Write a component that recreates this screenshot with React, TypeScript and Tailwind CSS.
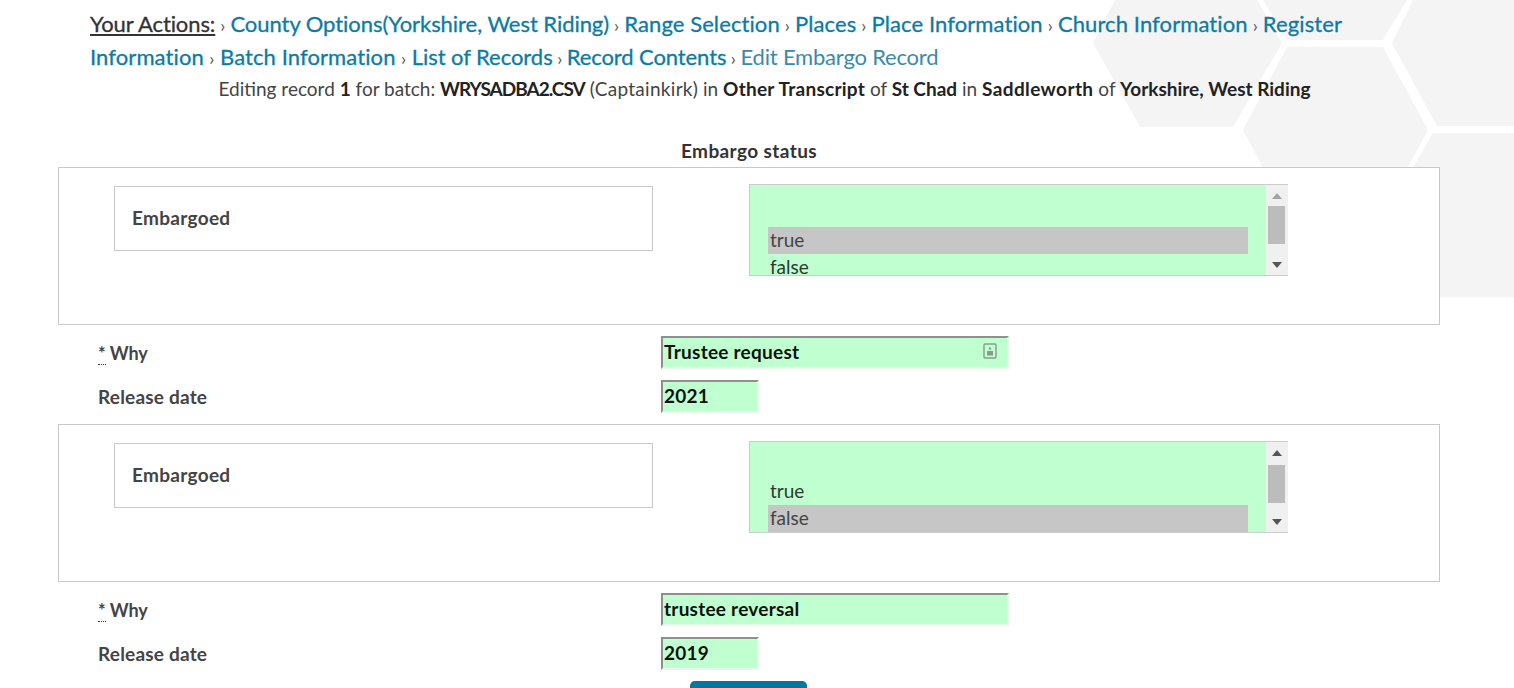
const font = "font-['Lato','Liberation_Sans',sans-serif]";

function Sep({ className = "mx-[5px]" }: { className?: string }) {
  return <span className={`${className} text-[18px] leading-none text-[#555]`}>›</span>;
}

function Crumb({ children, className = "" }: { children: React.ReactNode; className?: string }) {
  return <a className={`text-[#0b7ca3] [-webkit-text-stroke:0.3px_#0b7ca3] ${className}`}>{children}</a>;
}

function ListBox({ selected }: { selected: "true" | "false" }) {
  const scrolled = selected === "false";
  const opts = ["true", "false"];
  return (
    <div className="relative flex h-[92px] w-[539px] overflow-hidden border border-r-0 border-[#cccccc] bg-[#c0ffd0]">
      <div className={`flex-1 pl-[18px] ${scrolled ? "pt-[36px]" : "pt-[42px]"}`}>
        {opts.map((o) => (
          <div
            key={o}
            className={`h-[27px] w-[480px] pl-[2px] text-[19px] leading-[26px] ${
              o === selected ? "bg-[#c6c6c6] text-[#444]" : "text-[#2b3a2f]"
            }`}
          >
            {o}
          </div>
        ))}
      </div>
      <div className="flex w-[22px] flex-col items-center justify-between bg-[#f0f0f0] py-[6px]">
        <svg width="10" height="6" viewBox="0 0 10 6" className="mt-[2px]">
          <path d="M5 0 L10 6 L0 6 Z" fill={scrolled ? "#555" : "#a3a3a3"} />
        </svg>
        <div className={`absolute right-[3px] h-[38px] w-[17px] bg-[#bcbcbc] ${scrolled ? "top-[23px]" : "top-[21px]"}`} />
        <svg width="10" height="6" viewBox="0 0 10 6" className="mb-[1px]">
          <path d="M0 0 L10 0 L5 6 Z" fill="#555" />
        </svg>
      </div>
    </div>
  );
}

function Field({ value, w, icon }: { value: string; w: string; icon?: boolean }) {
  return (
    <div
      className={`relative h-[33px] ${w} border-2 border-t-[#8f8f8f] border-l-[#8f8f8f] border-r-[#e8f8ec] border-b-[#e8f8ec] bg-[#c0ffd0] pl-[1px] text-[19px] font-bold leading-[27px] tracking-[0.25px] text-[#111]`}
    >
      {value}
      {icon && (
        <svg width="14" height="16" viewBox="0 0 14 16" className="absolute right-[10px] top-[5px]">
          <rect x="1" y="1" width="12" height="14" rx="1" fill="none" stroke="#8a9a8e" strokeWidth="1.4" />
          <path d="M7 3.5 L8.6 6.5 L5.4 6.5 Z" fill="#8a9a8e" />
          <rect x="4" y="8" width="6" height="4.5" fill="#8a9a8e" />
        </svg>
      )}
    </div>
  );
}

function Row({ label, why, children, mt }: { label: string; why?: boolean; children: React.ReactNode; mt: string }) {
  return (
    <div className={`flex items-center ${mt}`}>
      <div className={`w-[603px] pl-[40px] font-bold leading-[27px] text-[#444] ${why ? "pt-[2px] text-[18px]" : "text-[19px] tracking-[0.2px]"}`}>
        {why && <span className="mr-[4px] border-b border-dotted border-[#333] leading-[14px]">*</span>}
        {label}
      </div>
      {children}
    </div>
  );
}

function Box({ selected }: { selected: "true" | "false" }) {
  return (
    <div className="relative h-[158px] w-[1382px] border border-[#c8c8c8] bg-white pl-[55px] pt-[16px]">
      <div className="flex items-start">
        <div className="mt-[2px] flex h-[65px] w-[539px] items-center border border-[#c8c8c8] bg-white pl-[17px] text-[19px] font-bold tracking-[0.3px] text-[#444]">
          Embargoed
        </div>
        <div className="ml-[96px]">
          <ListBox selected={selected} />
        </div>
      </div>
    </div>
  );
}

const B = ({ children, className = "" }: { children: React.ReactNode; className?: string }) => (
  <b className={`text-[#222] ${className}`}>{children}</b>
);

export default function App() {
  return (
    <div className={`relative h-[688px] w-[1514px] overflow-hidden bg-white ${font}`}>
      <svg className="absolute left-0 top-0" width="1514" height="688" viewBox="0 0 1514 688">
        <g fill="#f4f4f5">
          <polygon points="1115,0 1257,0 1282,43 1233,127 1140,127 1093,43" />
          <polygon points="1263,0 1407,0 1383,40 1287,40" />
          <polygon points="1413,0 1514,0 1514,126 1437,126 1392,43" />
          <polygon points="1287,47 1383,47 1428,130 1383,213 1287,213 1243,130" />
          <polygon points="1433,133 1514,133 1514,297 1400,297 1400,190" />
        </g>
      </svg>
      <div className="relative pl-[58px]">
        <div className="ml-[32px] w-[1270px] pt-[7px] text-[22px] leading-[33px] tracking-[0.1px]">
          <span className="text-[#333] underline [-webkit-text-stroke:0.3px_#333] tracking-[-0.1px]">Your Actions:</span>
          <Sep /><Crumb className="tracking-[-0.05px]">County Options(Yorkshire, West Riding)</Crumb>
          <Sep /><Crumb>Range Selection</Crumb>
          <Sep /><Crumb>Places</Crumb>
          <Sep /><Crumb>Place Information</Crumb>
          <Sep /><Crumb>Church Information</Crumb>
          <Sep /><Crumb>Register Information</Crumb>
          <Sep className="mx-[5.5px]" /><Crumb>Batch Information</Crumb>
          <Sep className="mx-[5.5px]" /><Crumb className="tracking-[-0.05px]">List of Records</Crumb>
          <Sep className="mx-[4.5px]" /><Crumb className="tracking-[-0.1px]">Record Contents</Crumb>
          <Sep className="mx-[4.5px]" /><span className="tracking-[-0.2px] text-[#3a8aa8]">Edit Embargo Record</span>
        </div>
        <div className="mt-[1px] w-[1413px] text-center text-[19px] leading-[30px] text-[#444]">
          Editing record <B>1</B> for batch: <B className="tracking-[-1px]">WRYSADBA2.CSV</B>{" "}
          <span className="tracking-[0.3px]">(Captainkirk)</span> in{" "}
          <B className="tracking-[0.25px]">Other Transcript</B> of <B>St Chad</B> in{" "}
          <B className="tracking-[0.4px]">Saddleworth</B> of <B>Yorkshire, West Riding</B>
        </div>
        <div className="mt-[33px] w-[1382px] text-center text-[19px] font-bold leading-[27px] tracking-[0.4px] text-[#333]">
          Embargo status
        </div>
        <div className="mt-[3px]">
          <Box selected="true" />
        </div>
        <Row label="Why" why mt="mt-[11px]">
          <Field value="Trustee request" w="w-[348px]" icon />
        </Row>
        <Row label="Release date" mt="mt-[11px]">
          <Field value="2021" w="w-[98px]" />
        </Row>
        <div className="mt-[11px]">
          <Box selected="false" />
        </div>
        <Row label="Why" why mt="mt-[11px]">
          <Field value="trustee reversal" w="w-[348px]" />
        </Row>
        <Row label="Release date" mt="mt-[11px]">
          <Field value="2019" w="w-[98px]" />
        </Row>
        <div className="ml-[632px] mt-[11px] h-[40px] w-[117px] rounded-[5px] bg-[#0077a3]" />
      </div>
    </div>
  );
}
